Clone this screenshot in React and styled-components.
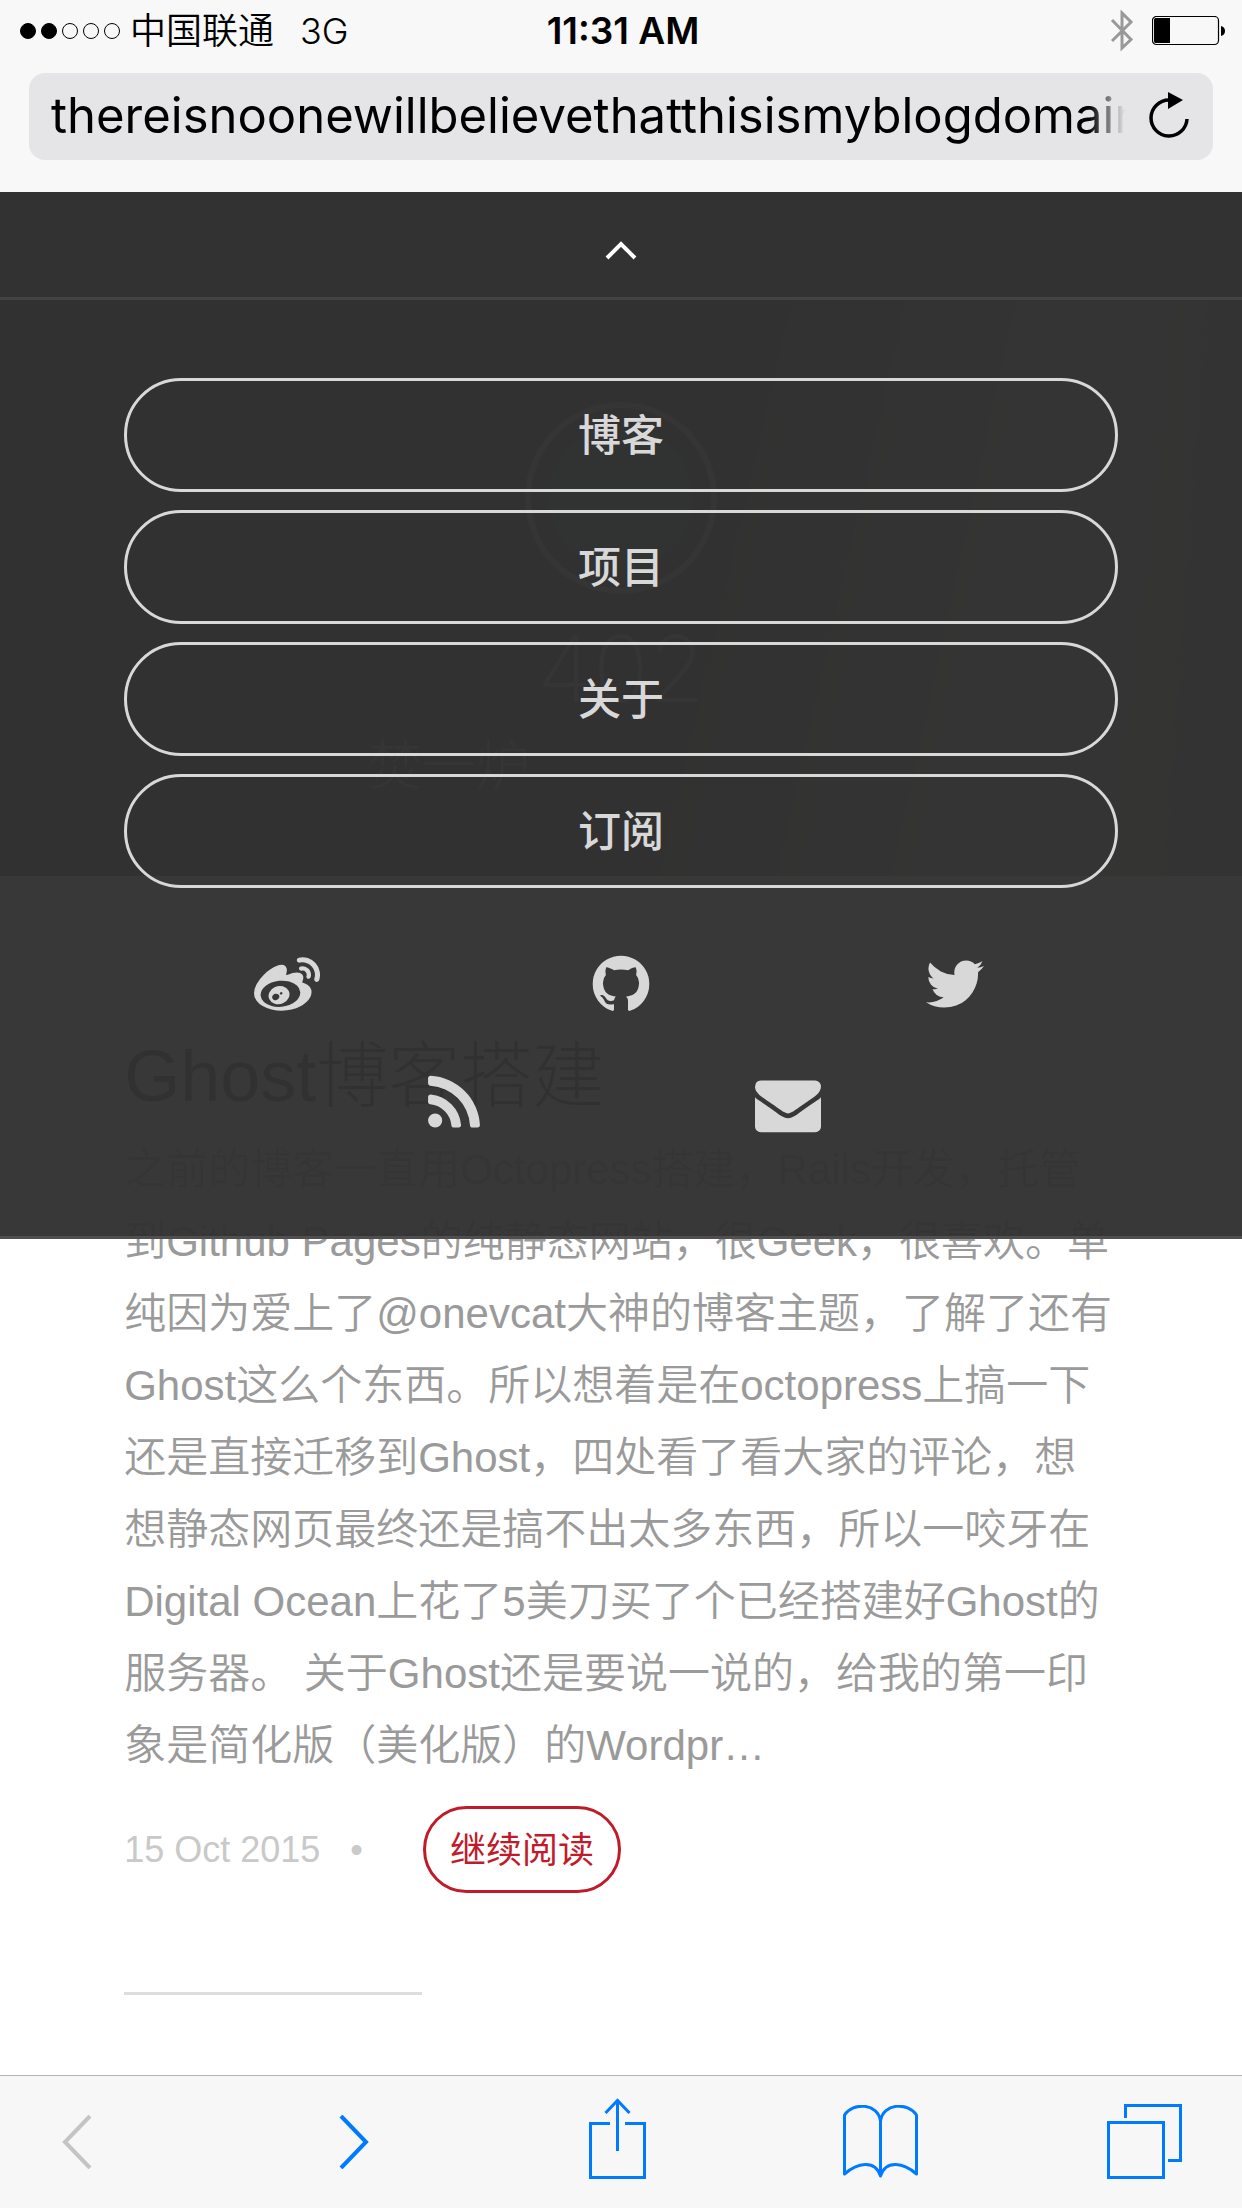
import React from "react";
import styled, { createGlobalStyle } from "styled-components";

const sans = '"Liberation Sans", "Noto Sans CJK SC", sans-serif';
const ui = 'Inter, "Noto Sans CJK SC", sans-serif';

const Global = createGlobalStyle`
  *, *::before, *::after { box-sizing: border-box; }
  body { margin: 0; background: #fff; font-family: ${sans}; }
  button, input { font: inherit; }
  svg { display: block; flex: none; }
`;

const Screen = styled.div`
  min-height: 100vh;
  display: flex;
  flex-direction: column;
  overflow-x: hidden;
`;

const BrowserTop = styled.header`
  background: #f8f8f8;
  height: 192px;
  font-family: ${ui};
  color: #000;
`;

const StatusBar = styled.div`
  display: grid;
  grid-template-columns: 1fr auto 1fr;
  align-items: center;
  height: 62px;
  padding: 0 16px 0 20px;
  font-size: 36px;
  line-height: 44px;
`;

const StatusLeft = styled.div`
  display: flex;
  align-items: center;
`;

const Signal = styled.div`
  display: flex;
  gap: 5px;
  margin-right: 10px;
`;

const Dot = styled.span`
  width: 16px;
  height: 16px;
  border-radius: 50%;
  border: 1px solid #000;
  background: ${(p) => (p.$on ? "#000" : "transparent")};
`;

const Carrier = styled.span`
  font-weight: 350;
  margin-right: 26px;
`;

const Network = styled.span`
  font-size: 36px;
  font-weight: 300;
`;

const Clock = styled.time`
  font-size: 37px;
  font-weight: 600;
`;

const StatusRight = styled.div`
  display: flex;
  align-items: center;
  justify-content: flex-end;
  gap: 18px;
`;

const AddressBar = styled.form`
  display: flex;
  align-items: center;
  height: 87px;
  margin: 11px 29px 0;
  padding: 0 22px;
  border-radius: 16px;
  background: #e5e5e8;
`;

const AddressInput = styled.input`
  flex: 1;
  min-width: 0;
  height: 66px;
  padding: 0 0 2px;
  border: 0;
  outline: 0;
  background: none;
  color: #000;
  font-size: 49px;
  line-height: 64px;
  mask-image: linear-gradient(to right, #000 calc(100% - 36px), transparent);
`;

const IconButton = styled.button`
  display: flex;
  align-items: center;
  justify-content: center;
  width: 76px;
  padding: 0;
  border: 0;
  background: none;
  color: ${(p) => p.$color || "#000"};
`;

const Reload = styled(IconButton)`
  width: 66px;
  height: 64px;
  padding: 0 0 4px 24px;
  justify-content: flex-start;
`;

const Page = styled.main`
  position: relative;
  flex: 1;
`;

const Hero = styled.section`
  height: 684px;
  display: flex;
  flex-direction: column;
  align-items: center;
  padding-top: 210px;
  background:
    radial-gradient(circle at 15% 20%, #1d3050, transparent 8%),
    radial-gradient(circle at 29% 35%, #1d3050, transparent 8%),
    radial-gradient(circle at 26% 52%, #1d3050, transparent 8%),
    linear-gradient(100deg, transparent 55%, #ffffff66 80%, #ffffff44),
    linear-gradient(165deg, #1c2422, #38342c);
  color: #9a9a9a;
`;

const HeroTitle = styled.h1`
  margin: 20px 0 0;
  font-family: Inter, sans-serif;
  font-size: 92px;
  line-height: 110px;
  font-weight: 200;
`;

const HeroSubtitle = styled.p`
  width: 506px;
  margin: 6px 0 0;
  font-size: 54px;
  font-weight: 300;
  line-height: 72px;
`;

const Nav = styled.nav`
  position: absolute;
  top: 0;
  left: 0;
  right: 0;
  height: 1047px;
  background: rgba(50, 50, 50, 0.97);
  border-bottom: 3px solid #504e4e;
`;

const NavToggle = styled(IconButton)`
  width: 100%;
  height: 108px;
  padding-top: 11px;
  background: #323232;
  border-bottom: 3px solid #434343;
`;

const MenuList = styled.ul`
  list-style: none;
  margin: 0;
  padding: 78px 10% 0;
  display: grid;
  gap: 18px;
`;

const MenuLink = styled.a`
  display: flex;
  align-items: center;
  justify-content: center;
  height: 114px;
  padding-top: 2px;
  border: 3px solid #d8d8d8;
  border-radius: 57px;
  color: #d8d8d8;
  font-size: 43px;
  font-weight: 500;
  line-height: 60px;
  text-decoration: none;
`;

const SocialList = styled.ul`
  list-style: none;
  margin: 0;
  padding: 36px 120px 0;
  display: flex;
  flex-wrap: wrap;
  justify-content: center;
`;

const SocialItem = styled.li`
  width: 33.33%;
  height: 120px;
  display: flex;
  align-items: center;
  justify-content: center;
`;

const SocialLink = styled.a`
  color: #d8d8d8;
`;

const Post = styled.article`
  padding: 146px 10% 0;
`;

const PostTitle = styled.h2`
  margin: 0;
  font-size: 72px;
  font-weight: 300;
  line-height: 108px;
  color: #313131;
`;

const Excerpt = styled.p`
  margin: 4px 0 0;
  font-size: 42px;
  font-weight: 350;
  line-height: 72px;
  color: #9a9a9a;
`;

const Line = styled.span`
  display: block;
  white-space: nowrap;
`;

const Meta = styled.footer`
  display: flex;
  align-items: center;
  margin-top: 24px;
  font-size: 36px;
  line-height: 44px;
  color: #c9c9c9;
`;

const Bullet = styled.span`
  margin: 0 60px 0 30px;
`;

const ReadMore = styled.a`
  display: flex;
  align-items: center;
  justify-content: center;
  height: 87px;
  padding: 2px 24px 0;
  border: 3px solid #c01b2a;
  border-radius: 44px;
  color: #c01b2a;
  text-decoration: none;
`;

const Rule = styled.hr`
  width: 30%;
  height: 3px;
  margin: 99px 0 0;
  border: 0;
  background: #ddd;
`;

const Toolbar = styled.nav`
  display: flex;
  align-items: center;
  justify-content: space-between;
  height: 133px;
  padding: 0 60px 0 62px;
  border-top: 1px solid #b2b2b2;
  background: #f7f7f7;
`;

const BackButton = styled(IconButton)`
  width: 66px;
  justify-content: flex-start;
`;

const SocialIcon = ({ d }) => (
  <svg width="66" height="66" viewBox="0 0 1792 1792" fill="currentColor" aria-hidden="true">
    <path d={d} />
  </svg>
);

const social = [
  {
    name: "Weibo",
    d: "M675 1284q21-34 11-69t-45-50q-34-14-73-1t-60 46q-22 34-13 68.5t43 50.5 74.5 2.5 62.5-47.5zm94-121q8-13 3.5-26.5t-17.5-18.5q-14-5-28.5.5t-21.5 18.5q-17 31 13 45 14 5 29-.5t22-18.5zm174 107q-45 102-158 150t-224 12q-107-34-147.5-126.5t6.5-187.5q47-93 151.5-139t210.5-19q111 29 158.5 119.5t2.5 190.5zm312-160q-9-96-89-170t-208.5-109-274.5-21q-223 23-369.5 141.5t-132.5 264.5q9 96 89 170t208.5 109 274.5 21q223-23 369.5-141.5t132.5-264.5zm308 4q0 68-37 139.5t-109 137-168.5 117.5-226 83-270.5 31-275-33.5-240.5-93-171.5-151-65-199.5q0-115 69.5-245t197.5-258q169-169 341.5-236t246.5 7q65 64 20 209-4 14-1 20t10 7 14.5-.5 13.5-3.5l6-2q139-59 246-59t153 61q45 63 0 178-2 13-4.5 20t4.5 12.5 12 7.5 17 6q57 18 103 47t80 81.5 34 116.5zm-74-624q42 47 54.5 108.5t-6.5 117.5q-8 23-29.5 34t-44.5 4q-23-8-34-29.5t-4-44.5q20-63-24-111t-107-35q-24 5-45-8t-25-37q-5-24 8-44.5t37-25.5q60-13 119 5.5t101 65.5zm181-163q87 96 112.5 222.5t-13.5 241.5q-9 27-34 40t-52 4-40-34-5-52q28-82 10-172t-80-158q-62-69-148-95.5t-173-8.5q-28 6-52-9.5t-30-43.5 9.5-51.5 43.5-29.5q123-26 244 11.5t208 134.5z",
  },
  {
    name: "GitHub",
    d: "M896 128q209 0 385.5 103t279.5 279.5 103 385.5q0 251-146.5 451.5t-378.5 277.5q-27 5-40-7t-13-30q0-3 .5-76.5t.5-134.5q0-97-52-142 57-6 102.5-18t94-39 81-66.5 53-105 20.5-150.5q0-119-79-206 37-91-8-204-28-9-81 11t-92 44l-38 24q-93-26-192-26t-192 26q-16-11-42.5-27t-83.5-38.5-85-13.5q-45 113-8 204-79 87-79 206 0 85 20.5 150t52.5 105 80.5 67 94 39 102.5 18q-39 36-49 103-21 10-45 15t-57 5-65.5-21.5-55.5-62.5q-19-32-48.5-52t-49.5-24l-20-3q-21 0-29 4.5t-5 11.5 9 14 13 12l7 5q22 10 43.5 38t31.5 51l10 23q13 38 44 61.5t67 30 69.5 7 55.5-3.5l23-4q0 38 .5 88.5t.5 54.5q0 18-13 30t-40 7q-232-77-378.5-277.5t-146.5-451.5q0-209 103-385.5t279.5-279.5 385.5-103z",
  },
  {
    name: "Twitter",
    d: "M1684 408q-67 98-162 167 1 14 1 42 0 130-38 259.5t-115.5 248.5-184.5 210.5-258 146-323 54.5q-271 0-496-145 35 4 78 4 225 0 401-138-105-2-188-64.5t-114-159.5q33 5 61 5 43 0 85-11-112-23-185.5-111.5t-73.5-205.5v-4q68 38 146 41-66-44-105-115t-39-154q0-88 44-163 121 149 294.5 238.5t371.5 99.5q-8-38-8-74 0-134 94.5-228.5t228.5-94.5q140 0 236 102 109-21 205-78-37 115-142 178 93-10 186-50z",
  },
  {
    name: "RSS",
    d: "M576 1344q0 80-56 136t-136 56-136-56-56-136 56-136 136-56 136 56 56 136zm512 123q2 28-17 48-18 21-47 21h-135q-25 0-43-16.5t-20-41.5q-22-229-184.5-391.5t-391.5-184.5q-25-2-41.5-20t-16.5-43v-135q0-29 21-47 17-17 43-17h5q160 13 306 80.5t259 181.5q114 113 181.5 259t80.5 306zm512 2q2 27-18 47-18 20-46 20h-143q-26 0-44.5-17.5t-19.5-42.5q-12-215-101-408.5t-231.5-336-336-231.5-408.5-102q-25-1-42.5-19.5t-17.5-43.5v-143q0-28 20-46 18-18 44-18h3q262 13 501.5 120t425.5 294q187 186 294 425.5t120 501.5z",
  },
  {
    name: "Email",
    d: "M1792 710v794q0 66-47 113t-113 47h-1472q-66 0-113-47t-47-113v-794q44 49 101 87 362 246 497 345 57 42 92.5 65.5t94.5 48 110 24.5h2q51 0 110-24.5t94.5-48 92.5-65.5q170-123 498-345 57-39 100-87zm0-294q0 79-49 151t-122 123q-376 261-468 325-10 7-42.5 30.5t-54 38-52 32.5-57.5 27-50 9h-2q-23 0-50-9t-57.5-27-52-32.5-54-38-42.5-30.5q-91-64-262-182.5t-205-142.5q-62-42-117-115.5t-55-136.5q0-78 41.5-130t118.5-52h1472q65 0 112.5 47t47.5 113z",
  },
];

const menu = ["博客", "项目", "关于", "订阅"];

const excerpt = [
  "之前的博客一直用Octopress搭建，Rails开发，托管",
  "到Github Pages的纯静态网站，很Geek，很喜欢。单",
  "纯因为爱上了@onevcat大神的博客主题，了解了还有",
  "Ghost这么个东西。所以想着是在octopress上搞一下",
  "还是直接迁移到Ghost，四处看了看大家的评论，想",
  "想静态网页最终还是搞不出太多东西，所以一咬牙在",
  "Digital Ocean上花了5美刀买了个已经搭建好Ghost的",
  "服务器。 关于Ghost还是要说一说的，给我的第一印",
  "象是简化版（美化版）的Wordpr…",
];

const blue = "#007aff";

export default function App() {
  return (
    <>
      <Global />
      <Screen>
        <BrowserTop>
          <StatusBar>
            <StatusLeft>
              <Signal>
                {[1, 1, 0, 0, 0].map((on, i) => (
                  <Dot key={i} $on={on} />
                ))}
              </Signal>
              <Carrier>中国联通</Carrier>
              <Network>3G</Network>
            </StatusLeft>
            <Clock>11:31 AM</Clock>
            <StatusRight>
              <svg width="24" height="42" viewBox="0 0 24 42" fill="none" stroke="#999" strokeWidth="3">
                <path d="M2 10L21 29.500L12 38V3L21 12L2 31" />
              </svg>
              <svg width="74" height="30" viewBox="0 0 74 30">
                <rect x="0.500" y="0.500" width="66" height="28" rx="4" fill="none" stroke="#000" strokeWidth="1.200" />
                <path d="M3.500 2H18V27H3.500Q2 27 2 25V4Q2 2 3.500 2Z" />
                <path d="M69 10Q73 11 73 15T69 20Z" />
              </svg>
            </StatusRight>
          </StatusBar>
          <AddressBar onSubmit={(e) => e.preventDefault()}>
            <AddressInput aria-label="Address" defaultValue="thereisnoonewillbelievethatthisismyblogdomain" />
            <Reload type="button" aria-label="Reload">
              <svg width="40" height="46" viewBox="0 0 40 46">
                <path d="M20 8A18 18 0 1 0 38 27" fill="none" stroke="#000" strokeWidth="3.500" />
                <path d="M19 0L34 8L19 17Z" />
              </svg>
            </Reload>
          </AddressBar>
        </BrowserTop>

        <Page>
          <Hero>
            <svg width="192" height="192" viewBox="0 0 192 192" fill="none">
              <circle cx="96" cy="96" r="93" stroke="#999" strokeWidth="6" />
              <circle cx="96" cy="96" r="72" fill="#26454f" />
            </svg>
            <HeroTitle>402</HeroTitle>
            <HeroSubtitle>焚一炉</HeroSubtitle>
          </Hero>
          <Post>
            <PostTitle>Ghost博客搭建</PostTitle>
            <Excerpt>
              {excerpt.map((line) => (
                <Line key={line}>{line}</Line>
              ))}
            </Excerpt>
            <Meta>
              <time dateTime="2015-10-15">15 Oct 2015</time>
              <Bullet>•</Bullet>
              <ReadMore href="#post">继续阅读</ReadMore>
            </Meta>
            <Rule />
          </Post>

          <Nav aria-label="Blog">
            <NavToggle type="button" aria-label="Close menu">
              <svg width="32" height="20" viewBox="0 0 32 20" fill="none" stroke="#fff" strokeWidth="4">
                <path d="M2 18L16 4L30 18" />
              </svg>
            </NavToggle>
            <MenuList>
              {menu.map((label) => (
                <li key={label}>
                  <MenuLink href={"#" + label}>{label}</MenuLink>
                </li>
              ))}
            </MenuList>
            <SocialList>
              {social.map((s) => (
                <SocialItem key={s.name}>
                  <SocialLink href={"#" + s.name} aria-label={s.name}>
                    <SocialIcon d={s.d} />
                  </SocialLink>
                </SocialItem>
              ))}
            </SocialList>
          </Nav>
        </Page>

        <Toolbar aria-label="Browser">
          <BackButton aria-label="Back" $color="#c4c4c4">
            <svg width="30" height="54" viewBox="0 0 30 54" fill="none" stroke="currentColor" strokeWidth="4">
              <path d="M28 1L3 27L28 53" />
            </svg>
          </BackButton>
          <IconButton aria-label="Forward" $color={blue}>
            <svg width="30" height="54" viewBox="0 0 30 54" fill="none" stroke="currentColor" strokeWidth="4">
              <path d="M2 1L27 27L2 53" />
            </svg>
          </IconButton>
          <IconButton aria-label="Share" $color={blue}>
            <svg width="57" height="88" viewBox="0 0 57 88" fill="none" stroke="currentColor" strokeWidth="3">
              <path d="M21 25.500H1.500V79.500H55.500V25.500H36M28.500 53V3M16.500 15L28.500 2.500L40.500 15" />
            </svg>
          </IconButton>
          <IconButton aria-label="Bookmarks" $color={blue}>
            <svg width="75" height="74" viewBox="0 0 75 74" fill="none" stroke="currentColor" strokeWidth="3" strokeLinejoin="round">
              <path d="M37.500 71V16C35 -2 10 -3 1.500 10V69C14 58 32 54 37.500 71C43 54 61 58 73.500 69V10C65 -3 40 -2 37.500 16" />
            </svg>
          </IconButton>
          <IconButton aria-label="Tabs" $color={blue}>
            <svg width="75" height="76" viewBox="0 0 75 76" fill="none" stroke="currentColor" strokeWidth="3">
              <path d="M1.500 18.500H56.500V73.500H1.500ZM18.500 14V1.500H73.500V56.500H61" />
            </svg>
          </IconButton>
        </Toolbar>
      </Screen>
    </>
  );
}
